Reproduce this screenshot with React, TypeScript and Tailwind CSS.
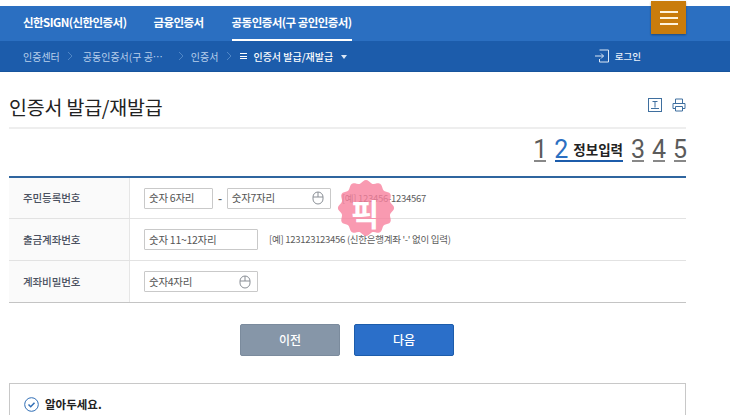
import { Fragment } from 'react';

const FONT = "font-['Noto_Sans_CJK_KR','Noto_Sans',sans-serif]";

function MouseIcon() {
  return (
    <svg width="12" height="14" viewBox="0 0 12 14" fill="none" stroke="#8a8f96" strokeWidth="1">
      <rect x="1" y="1" width="10" height="12" rx="5" />
      <path d="M1 6h10M6 1v5" />
    </svg>
  );
}

function Chevron() {
  return (
    <svg width="6" height="10" viewBox="0 0 6 10" fill="none" stroke="#4f86c6" strokeWidth="1">
      <path d="M1 1l4 4-4 4" />
    </svg>
  );
}

function LoginIcon() {
  return (
    <svg width="14" height="14" viewBox="0 0 14 14" fill="none" stroke="#dbe7f5" strokeWidth="1">
      <path d="M4.5 1h9v12h-9V10" />
      <path d="M0 7h8.5M6 4.5L8.5 7 6 9.5" />
    </svg>
  );
}

function FontSizeIcon() {
  return (
    <svg width="14" height="14" viewBox="0 0 14 14" fill="none" stroke="#3f6f9f" strokeWidth="1">
      <rect x="0.5" y="0.5" width="13" height="13" />
      <path d="M4.5 3.5h5M7 3.5v6M3 10.5h8" />
    </svg>
  );
}

function PrintIcon() {
  return (
    <svg width="14" height="14" viewBox="0 0 14 14" fill="none" stroke="#3f6f9f" strokeWidth="1">
      <path d="M3.5 5V1h7v4M3.5 10.5H1V5.5h12v5h-2.5" />
      <path d="M3.5 8.5h7v4.5h-7z" />
    </svg>
  );
}

function CheckCircle() {
  return (
    <svg width="15" height="15" viewBox="0 0 15 15" fill="none" stroke="#2f6db5">
      <circle cx="7.5" cy="7.5" r="6.8" strokeWidth="1" />
      <path d="M4.5 7.5l2.2 2.2 3.8-4" strokeWidth="1.5" />
    </svg>
  );
}

function Stamp() {
  // 물결 모양 원
  const pts: string[] = [];
  for (let i = 0; i < 120; i++) {
    const a = (i / 120) * Math.PI * 2;
    const r = 26.5 + 1.6 * Math.cos(a * 12);
    pts.push(`${(29 + r * Math.cos(a)).toFixed(2)},${(29 + r * Math.sin(a)).toFixed(2)}`);
  }
  return (
    <div className="absolute left-[336px] top-[179px] flex h-[58px] w-[58px] items-center justify-center">
      <svg width="58" height="58" viewBox="0 0 58 58" className="absolute inset-0 left-[1px]">
        <polygon points={pts.join(' ')} fill="#f7819d" fillOpacity="0.8" />
      </svg>
      <span className="relative mt-[8px] text-[31px] font-bold leading-none text-white">픽</span>
    </div>
  );
}

function TextBox({ width, text, mouse }: { width: string; text: string; mouse?: boolean }) {
  return (
    <div
      className={`flex h-[21px] items-center justify-between rounded-[1px] border border-[#c9c9c9] bg-white pl-[4px] pr-[6px] text-[10.5px] text-[#555] ${width}`}
    >
      <span>{text}</span>
      {mouse && <MouseIcon />}
    </div>
  );
}

function FormRow({ label, height, last, children }: { label: string; height: string; last?: boolean; children: React.ReactNode }) {
  return (
    <div className={`flex border-b ${height} ${last ? 'border-[#c4c4c4]' : 'border-[#e2e2e2]'}`}>
      <div className="flex w-[121px] items-center border-r border-[#e6e6e6] bg-[#fafafa] pl-[14px] text-[10.5px] font-medium tracking-[-0.1px] text-[#4a5160]">
        {label}
      </div>
      <div className="flex flex-1 items-center pl-[14px] text-[9.5px] tracking-[-0.28px] text-[#5c5c5c]">{children}</div>
    </div>
  );
}

const STEPS = ['1', '2', '3', '4', '5'];

export default function App() {
  return (
    <div className={`relative h-[415px] w-[730px] overflow-hidden bg-white ${FONT}`}>
      <div className="h-[6px]" />
      <header className="flex h-[35px] items-start bg-[#2b6fc1] pl-[23px] text-[11.5px] font-bold tracking-[-0.55px] text-white">
        <span className="mt-[8px]">신한SIGN(신한인증서)</span>
        <span className="ml-[27px] mt-[8px]">금융인증서</span>
        <span className="ml-[28px] flex h-[35px] flex-col justify-between pt-[8px]">
          공동인증서(구 공인인증서)
          <span className="block h-[2px] bg-white" />
        </span>
      </header>
      <div className="absolute left-[651px] top-[1px] flex h-[33px] w-[35px] flex-col items-center justify-center gap-[4px] bg-[#c97c0c] shadow-[0_1px_2px_rgba(0,0,0,0.35)]">
        <span className="h-[2px] w-[18px] bg-[#fff3dc]" />
        <span className="h-[2px] w-[18px] bg-[#fff3dc]" />
        <span className="h-[2px] w-[18px] bg-[#fff3dc]" />
      </div>

      <nav className="flex h-[31px] items-center border-b border-[#17549d] bg-[#1c5cab] pl-[23px] text-[10px] text-[#b9d0ec]">
        <span>인증센터</span>
        <span className="ml-[7px] mr-[10px]"><Chevron /></span>
        <span>공동인증서(구 공⋯</span>
        <span className="ml-[15px] mr-[7px]"><Chevron /></span>
        <span>인증서</span>
        <span className="ml-[8px] mr-[8px]"><Chevron /></span>
        <span className="mr-[6px] flex flex-col gap-[1.5px]">
          <span className="block h-[1px] w-[7px] bg-white" />
          <span className="block h-[1px] w-[7px] bg-white" />
          <span className="block h-[1px] w-[7px] bg-white" />
        </span>
        <span className="font-medium text-white">인증서 발급/재발급</span>
        <span className="ml-[8px] mt-[2px] h-0 w-0 border-x-[3px] border-t-[4px] border-x-transparent border-t-[#dbe7f5]" />
        <span className="ml-auto mr-[89px] flex items-center gap-[6px] text-[9.5px] font-medium text-[#eaf1fa]">
          <LoginIcon />
          로그인
        </span>
      </nav>

      <main className="pl-[9px] pr-[44px]">
        <div className="flex h-[57px] items-center justify-between border-b-2 border-[#eeeeee] pt-[15px]">
          <h1 className="text-[19.5px] font-normal leading-none tracking-[-0.2px] text-[#222]">인증서 발급/재발급</h1>
          <div className="mb-[4px] flex gap-[10px]">
            <FontSizeIcon />
            <PrintIcon />
          </div>
        </div>

        <div className="flex h-[47px] items-start justify-end gap-[9px] pt-[9px] font-[Roboto,sans-serif]">
          {STEPS.map((n) => (
            <Fragment key={n}>
              {n === '2' ? (
                <div className="flex h-[24px] items-center gap-[6px] border-b-2 border-[#1c5cab]">
                  <span className="flex w-[12px] justify-center text-[25px] leading-none text-[#2b6fc1]">2</span>
                  <span className={`text-[13.5px] font-bold text-[#222] ${FONT}`}>정보입력</span>
                </div>
              ) : (
                <span className="flex h-[24px] w-[12px] items-center justify-center border-b-2 border-[#888] text-[25px] leading-none text-[#5b5b5b]">
                  {n}
                </span>
              )}
            </Fragment>
          ))}
        </div>

        <section className="border-t-2 border-[#2f659f]">
          <FormRow label="주민등록번호" height="h-[41px]">
            <TextBox width="w-[69px]" text="숫자 6자리" />
            <span className="mx-[5px] text-[11px] font-bold">-</span>
            <TextBox width="w-[104px]" text="숫자7자리" mouse />
            <span className="ml-[11px]">[예] 123456-1234567</span>
          </FormRow>
          <FormRow label="출금계좌번호" height="h-[42px]">
            <TextBox width="w-[114px]" text="숫자 11~12자리" />
            <span className="ml-[11px]">[예] 123123123456 (신한은행계좌 '-' 없이 입력)</span>
          </FormRow>
          <FormRow label="계좌비밀번호" height="h-[42px]" last>
            <TextBox width="w-[114px]" text="숫자4자리" mouse />
          </FormRow>
        </section>

        <div className="mt-[21px] flex justify-center gap-[14px] pr-[1px]">
          <button className="h-[32px] w-[100px] rounded-[2px] border border-[#7b8b9d] bg-[#8696a8] text-[12px] font-medium text-white">
            이전
          </button>
          <button className="h-[32px] w-[100px] rounded-[2px] border border-[#1c5cab] bg-[#2b6fc9] text-[12px] font-medium text-white">
            다음
          </button>
        </div>

        <section className="mt-[27px] h-[60px] border border-[#c8c8c8] pl-[14px] pt-[13px]">
          <div className="flex items-center gap-[6px] text-[11.5px] font-bold leading-none text-[#222]">
            <CheckCircle />
            알아두세요.
          </div>
        </section>
      </main>

      <Stamp />
    </div>
  );
}
